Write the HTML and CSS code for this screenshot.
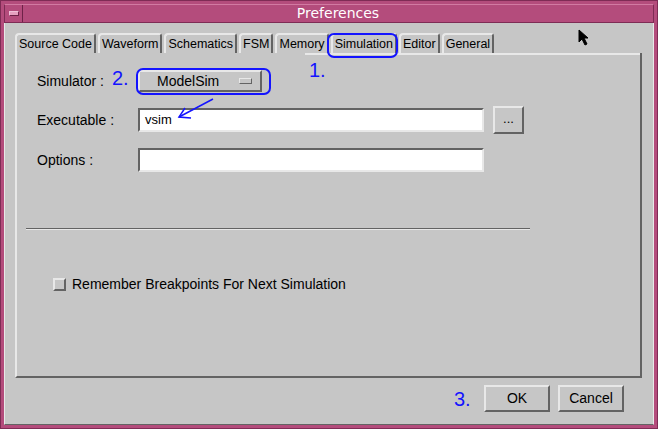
FILE: index.html
```html
<!DOCTYPE html>
<html lang="en">
<head>
    <meta charset="UTF-8">
    <title>Preferences</title>
    <link rel="stylesheet" href="styles.css">
</head>
<body>
    <div class="window">
        <div class="titlebar">
            <div class="menu-btn"><span></span></div>
            <div class="title">Preferences</div>
        </div>
        <div class="client">
            <div class="tabs">
                <div class="tab">Source Code</div>
                <div class="tab">Waveform</div>
                <div class="tab">Schematics</div>
                <div class="tab">FSM</div>
                <div class="tab">Memory</div>
                <div class="tab active">Simulation</div>
                <div class="tab">Editor</div>
                <div class="tab">General</div>
            </div>
            <div class="panel">
                <div class="form">
                    <label>Simulator :</label>
                    <div class="option-btn">ModelSim<span class="indicator"></span></div>
                    <span></span>
                    <label>Executable :</label>
                    <div class="field">vsim</div>
                    <div class="btn dots">...</div>
                    <label>Options :</label>
                    <div class="field"></div>
                </div>
                <div class="separator"></div>
                <div class="check-row">
                    <span class="checkbox"></span>
                    <span>Remember Breakpoints For Next Simulation</span>
                </div>
            </div>
            <div class="actions">
                <div class="btn action">OK</div>
                <div class="btn action">Cancel</div>
            </div>
        </div>

        <!-- hand drawn notes on top of the dialog -->
        <div class="ring ring-tab"></div>
        <div class="ring ring-sim"></div>
        <div class="note note-1">1.</div>
        <div class="note note-2">2.</div>
        <div class="note note-3">3.</div>
        <svg class="arrow" width="60" height="40" viewBox="0 0 60 40">
            <path d="M42 8 L8 26" stroke="#1414ff" stroke-width="1.5" fill="none"/>
            <path d="M14 17 L8 26 L20 27" stroke="#1414ff" stroke-width="1.5" fill="none"/>
        </svg>
        <svg class="cursor" width="12" height="18" viewBox="0 0 12 18">
            <path d="M1 1 L1 13 L4 10 L7 16 L9 15 L6 9 L10 9 Z" fill="#000" stroke="#000" stroke-width="1"/>
        </svg>
    </div>
</body>
</html>
```

FILE: styles.css
```css
body {
    margin: 0;
    padding: 0;
    background-color: #b44c7c;
    font-family: "Liberation Sans", Arial, sans-serif;
}

.window {
    position: relative;
    width: 658px;
    height: 429px;
    box-sizing: border-box;
    padding: 3px;
    border: 1px solid #7e2c55;
    background-color: #b44c7c;
    display: flex;
    flex-direction: column;
}

.titlebar {
    display: flex;
    height: 19px;
    box-sizing: border-box;
    border: 1px solid #7e2c55;
    border-top-color: #d27aa2;
    background-color: #b44c7c;
}

.menu-btn {
    width: 17px;
    border-right: 1px solid #6e2248;
    display: flex;
    align-items: center;
    justify-content: center;
}

.menu-btn span {
    width: 8px;
    height: 3px;
    background-color: #e6a0c0;
    border: 1px solid #6e2248;
    border-top-color: #f0c0d8;
    border-left-color: #f0c0d8;
}

.title {
    flex: 1;
    text-align: center;
    color: white;
    font-family: "DejaVu Sans", sans-serif;
    font-size: 14px;
    line-height: 17px;
}

.client {
    flex: 1;
    background-color: #c6c6c6;
    border-left: 1px solid #e8e8e8;
    border-right: 1px solid #e8e8e8;
    border-bottom: 1px solid #636363;
    padding: 10px 10px 0 10px;
}

.tabs {
    display: flex;
    gap: 2px;
    height: 20px;
}

.tab {
    box-sizing: border-box;
    height: 20px;
    padding: 0 2px;
    border-top: 2px solid #e8e8e8;
    border-left: 2px solid #e8e8e8;
    border-right: 2px solid #636363;
    border-radius: 4px 3px 0 0;
    font-size: 12.5px;
    line-height: 18px;
    color: #000;
}

.panel {
    position: relative;
    box-sizing: border-box;
    width: 627px;
    height: 325px;
    border-left: 2px solid #e8e8e8;
    border-right: 2px solid #636363;
    border-bottom: 2px solid #636363;
    padding-top: 17px;
}

.panel::before {
    content: "";
    position: absolute;
    top: 0;
    left: 288px;
    right: 0;
    height: 2px;
    background-color: #e8e8e8;
}

.form {
    display: grid;
    grid-template-columns: 101px 346px auto;
    row-gap: 14px;
    align-items: center;
    margin-left: 20px;
    font-size: 14px;
    color: #000;
}

.option-btn {
    position: relative;
    width: 124px;
    height: 22px;
    box-sizing: border-box;
    border: 2px solid #e8e8e8;
    border-right-color: #636363;
    border-bottom-color: #636363;
    line-height: 18px;
    padding-left: 17px;
}

.indicator {
    position: absolute;
    right: 8px;
    top: 6px;
    width: 13px;
    height: 6px;
    box-sizing: border-box;
    border: 1px solid #e8e8e8;
    border-right-color: #636363;
    border-bottom-color: #636363;
}

.field {
    box-sizing: border-box;
    width: 346px;
    height: 24px;
    background-color: white;
    border: 2px solid #636363;
    border-right-color: #e8e8e8;
    border-bottom-color: #e8e8e8;
    padding-left: 5px;
    font-size: 13px;
    line-height: 20px;
}

.btn {
    box-sizing: border-box;
    border: 2px solid #e8e8e8;
    border-right-color: #636363;
    border-bottom-color: #636363;
    text-align: center;
    color: #000;
}

.dots {
    width: 31px;
    height: 28px;
    margin-left: 9px;
    font-size: 13px;
    line-height: 22px;
}

.separator {
    width: 504px;
    height: 1px;
    margin: 56px 0 0 9px;
    background-color: #636363;
    border-bottom: 1px solid #e8e8e8;
}

.check-row {
    display: flex;
    align-items: center;
    gap: 6px;
    margin: 46px 0 0 36px;
    font-size: 14px;
}

.checkbox {
    width: 13px;
    height: 13px;
    box-sizing: border-box;
    border: 2px solid #e8e8e8;
    border-right-color: #636363;
    border-bottom-color: #636363;
}

.actions {
    display: flex;
    justify-content: flex-end;
    gap: 8px;
    margin-top: 7px;
    padding-right: 19px;
}

.action {
    width: 66px;
    height: 27px;
    font-size: 14px;
    line-height: 23px;
}

.ring {
    position: absolute;
    border: 2px solid #1414ff;
    border-radius: 7px;
}

.ring-tab {
    left: 326px;
    top: 32px;
    width: 67px;
    height: 21px;
}

.ring-sim {
    left: 135px;
    top: 67px;
    width: 131px;
    height: 23px;
}

.note {
    position: absolute;
    color: #1414ff;
    font-family: "Liberation Sans", sans-serif;
    font-size: 20px;
    line-height: 20px;
}

.note-1 {
    left: 308px;
    top: 59px;
}

.note-2 {
    left: 111px;
    top: 67px;
}

.note-3 {
    left: 453px;
    top: 388px;
}

.arrow {
    position: absolute;
    left: 170px;
    top: 90px;
}

.cursor {
    position: absolute;
    left: 577px;
    top: 28px;
}
```
